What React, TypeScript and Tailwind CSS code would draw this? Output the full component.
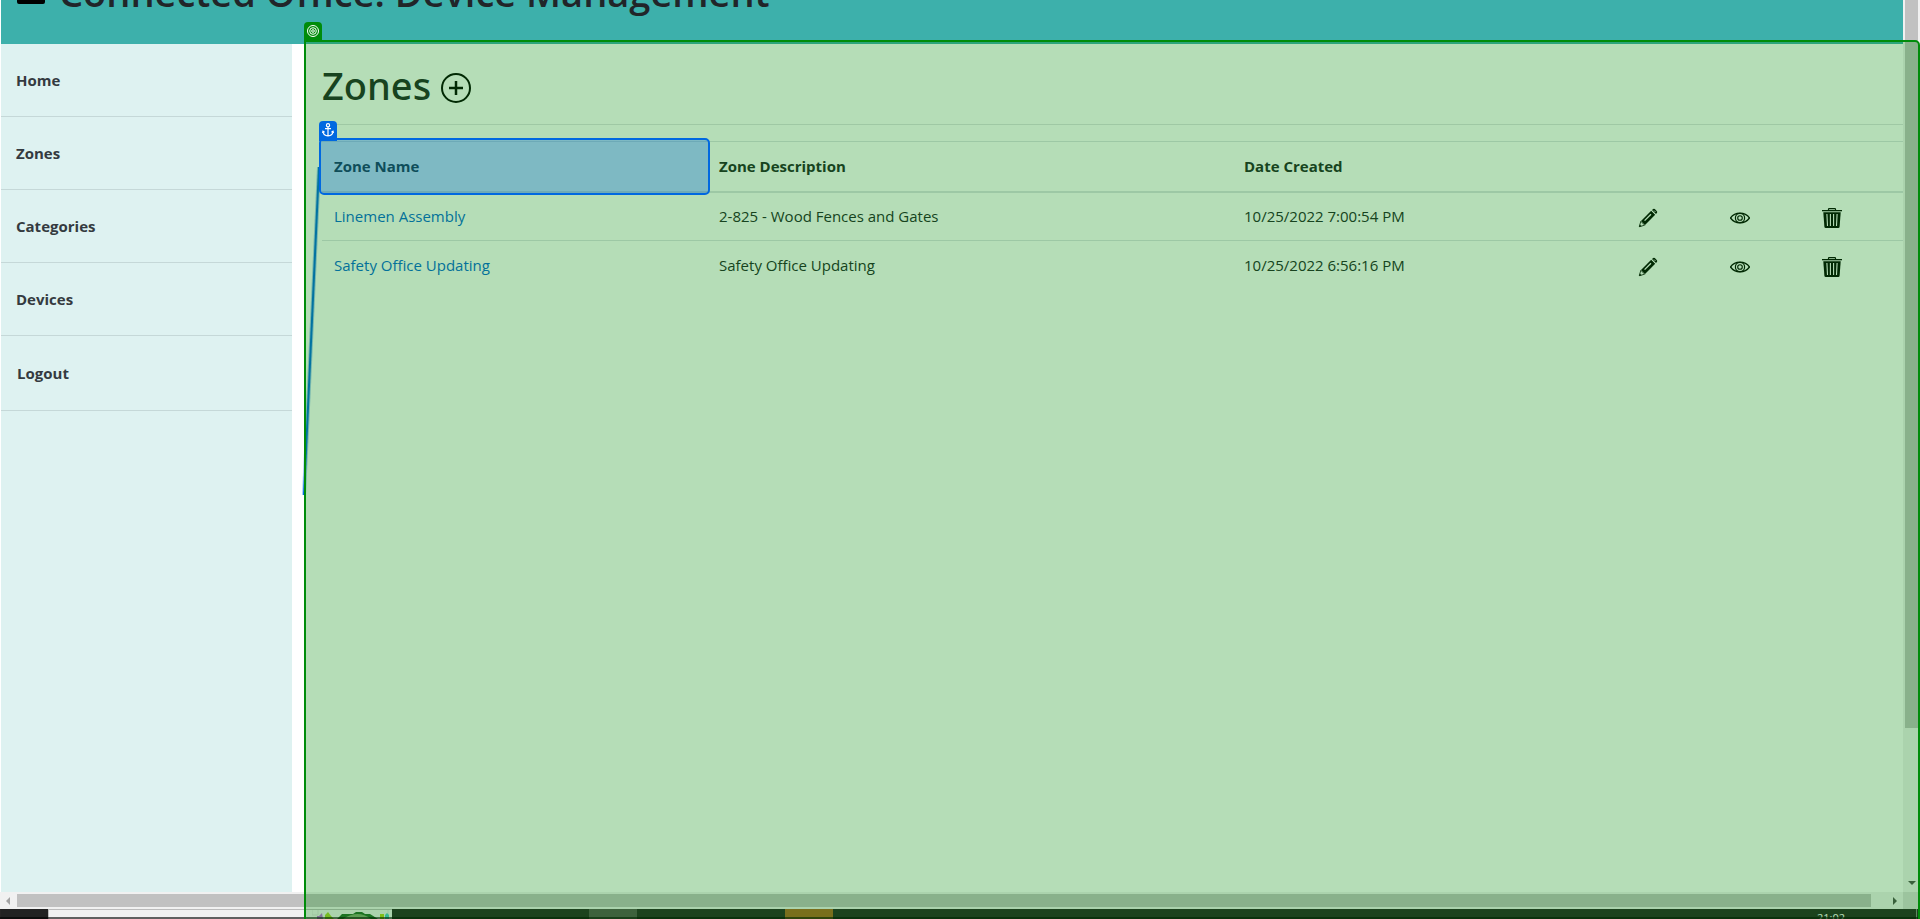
import React from "react";

const navItems = ["Home", "Zones", "Categories", "Devices", "Logout"];

const zones = [
  { name: "Linemen Assembly", description: "2-825 - Wood Fences and Gates", created: "10/25/2022 7:00:54 PM" },
  { name: "Safety Office Updating", description: "Safety Office Updating", created: "10/25/2022 6:56:16 PM" },
];

function PencilIcon() {
  return (
    <svg viewBox="0 0 20 20" className="size-5" aria-hidden="true">
      <path d="M13.2 2.8 17.2 6.8 7 17 3 13Z" fill="#000" />
      <path d="M14 2 15.2.9Q16 .4 16.8 1.1L18.9 3.2Q19.6 4 19 4.8L18 6Z" fill="#000" />
      <path d="m13.4 2.4 4.2 4.2" stroke="#fff" strokeWidth=".7" />
      <path d="M13 6.2 6.6 12.6" stroke="#fff" strokeWidth="1.3" />
      <path d="M2.8 13.3 1.3 18.7 6.7 17.2Z" fill="#fff" stroke="#000" strokeWidth=".8" />
      <path d="m1.1 18.9.7-2.5 1.8 1.8Z" fill="#000" />
      <path d="m16 2.5 1.5 1.5" stroke="#fff" strokeWidth=".8" />
    </svg>
  );
}

function EyeIcon() {
  return (
    <svg viewBox="0 0 20 20" className="size-5" fill="none" stroke="#000" aria-hidden="true">
      <path d="M.5 10C3 6.5 6.3 5.2 10 5.2S17 6.5 19.5 10C17 13.5 13.7 14.8 10 14.8S3 13.5.5 10Z" strokeWidth="1.3" />
      <circle cx="10" cy="10" r="4.6" strokeWidth="1.2" />
      <circle cx="10" cy="10" r="2.3" strokeWidth="1.1" />
    </svg>
  );
}

function TrashIcon() {
  return (
    <svg viewBox="0 0 20 20" className="size-5" aria-hidden="true">
      <path d="M6.5 2.3V1.3Q6.5.6 7.2.6H12.8Q13.5.6 13.5 1.3V2.3" fill="none" stroke="#000" strokeWidth="1.2" />
      <path d="M0 2H20V3.3H0Z" fill="#000" />
      <path d="M1.3 4.2H18.7L17.6 18.8Q17.5 20 16.3 20H3.7Q2.5 20 2.4 18.8Z" fill="#000" />
      <path d="m4.9 6 .6 12M8.4 6v12M11.6 6v12M15.1 6l-.6 12" stroke="#fff" strokeWidth="1.1" />
    </svg>
  );
}

function Header() {
  return (
    <header className="flex h-11 shrink-0 items-end gap-[14px] overflow-hidden bg-[#3db0ab] pb-7 pl-4">
      <svg viewBox="0 0 28 28" className="mb-3 size-7 shrink-0" aria-hidden="true">
        <path d="M0 28V24Q0 18 6 18H22Q28 18 28 24V26Q28 28 26 28H2Q0 28 0 26Z" fill="#000" />
        <circle cx="14" cy="8" r="7" fill="#000" />
      </svg>
      <h1 className="whitespace-nowrap text-[38px] leading-12 font-semibold text-[#212529]">
        Connected Office: Device Management
      </h1>
    </header>
  );
}

function Sidebar() {
  return (
    <nav className="w-[291px] shrink-0 bg-[#def2f1]">
      <ul>
        {navItems.map((item) => (
          <li
            key={item}
            className="flex h-[73px] items-center border-b border-[#c5d8d8] pl-[15px] last:h-[75px] last:pl-4"
          >
            <a href="#" className="text-[15px] leading-6 font-bold text-[#343a40]">
              {item}
            </a>
          </li>
        ))}
      </ul>
    </nav>
  );
}

function ZoneTable() {
  return (
    <table className="w-full table-fixed border-collapse text-left text-[15px] leading-6 text-[#212529]">
      <colgroup>
        <col className="w-[385px]" />
        <col className="w-[525px]" />
        <col />
        <col className="w-[92px]" />
        <col className="w-[92px]" />
        <col className="w-[93px]" />
      </colgroup>
      <thead>
        <tr className="h-[50px] border-t border-b-2 border-[#dee2e6] font-bold">
          <th className="relative px-3">
            Zone Name
            <div className="pointer-events-none absolute -inset-x-[3px] -top-1 -bottom-1 z-20 rounded-[5px] border-2 border-[#0068e0] bg-[#0068e0]/30">
              <span className="absolute -top-[19px] -left-0.5 flex h-5 w-[18px] items-start justify-center rounded-t-sm bg-[#0068e0] pt-0.5">
                <svg viewBox="0 0 12 14" className="h-3.5 w-3" fill="none" stroke="#fff" strokeWidth="1.2" aria-hidden="true">
                  <circle cx="6" cy="2.3" r="1.6" />
                  <path d="M6 4v8.8M3 5.7h6M1 8.3c0 3 2 4.4 5 4.6 3-.2 5-1.6 5-4.6M.5 10 1 8.3l1.6 1M11.5 10 11 8.3l-1.6 1" />
                </svg>
              </span>
            </div>
          </th>
          <th className="px-3">Zone Description</th>
          <th className="px-3">Date Created</th>
          <th aria-label="Edit" />
          <th aria-label="View" />
          <th aria-label="Delete" />
        </tr>
      </thead>
      <tbody>
        {zones.map((zone) => (
          <tr key={zone.name} className="h-[49px] border-b border-[#dee2e6] last:border-b-0">
            <td className="px-3">
              <a href="#" className="text-[#0366d6]">{zone.name}</a>
            </td>
            <td className="px-3">{zone.description}</td>
            <td className="px-3">{zone.created}</td>
            <td className="px-3 pt-[3px]">
              <button type="button" aria-label="Edit" className="block"><PencilIcon /></button>
            </td>
            <td className="px-3 pt-[3px]">
              <button type="button" aria-label="View" className="block"><EyeIcon /></button>
            </td>
            <td className="px-3 pt-[3px]">
              <button type="button" aria-label="Delete" className="block"><TrashIcon /></button>
            </td>
          </tr>
        ))}
      </tbody>
    </table>
  );
}

function Taskbar() {
  return (
    <footer className="relative flex h-2.5 shrink-0 overflow-hidden bg-[#272525] pl-px">
      <div className="w-[47px] bg-[#222]" />
      <div className="flex w-[344px] justify-end border-t border-l border-[#bbb] bg-[#f1f1f1]">
        <svg viewBox="0 0 80 9" className="h-[9px] w-20" aria-hidden="true">
          <path d="M0 0V5H6V0M76 0V9" fill="none" stroke="#ddd" />
          <path d="M25 9 30 4 41 4 44 2H50L53 4H58L66 9Z" fill="#276b2c" />
          <path d="M31 9Q46-1 59 9Z" fill="#83a773" />
          <path d="M5 9V6h2l3-3 1 6Z" fill="#bb6ed8" />
          <path d="M13 9V5l3-3 3 4 3 3Z" fill="#a5d02d" />
          <path d="M68 9V4h4v5Z" fill="#b3d31d" />
          <path d="M73 9V5l2-2 2 2v4Z" fill="#4bcbc8" />
        </svg>
      </div>
      <div className="ml-[197px] w-12 bg-[#555252]" />
      <div className="ml-[148px] w-12 bg-[#aa6424]" />
      <span className="mr-[71px] ml-auto pt-[3px] text-[11px] leading-3 text-white">21:02</span>
      <div className="mr-[3px] w-px bg-[#888]" />
      <div className="absolute inset-x-0 bottom-0 h-0.5 bg-black/60" />
    </footer>
  );
}

export default function App() {
  return (
    <div className="relative flex h-screen flex-col overflow-hidden bg-white font-['Open_Sans','Noto_Sans',sans-serif]">
      <div className="flex min-h-0 flex-1">
        <div className="flex min-w-0 flex-1 flex-col pl-px">
          <Header />
          <div className="flex min-h-0 flex-1">
            <Sidebar />
            <main className="min-w-0 flex-1 pl-[30px]">
              <div className="flex h-20 items-center gap-2.5 pt-2">
                <h2 className="pb-1.5 font-['Noto_Sans','Open_Sans',sans-serif] text-[38px] leading-12 font-medium text-[#212529]">
                  Zones
                </h2>
                <button type="button" aria-label="Add zone">
                  <svg viewBox="0 0 30 30" className="size-[30px]" fill="none" stroke="#000" strokeWidth="2" aria-hidden="true">
                    <circle cx="15" cy="15" r="14" />
                    <path d="M15 8v14M8 15h14" strokeWidth="2.5" />
                  </svg>
                </button>
              </div>
              <hr className="mb-4 border-[#e0e2e4]" />
              <ZoneTable />
            </main>
          </div>
        </div>
        <div className="flex w-[17px] shrink-0 flex-col items-center bg-[#f1f1f1]">
          <div className="h-[728px] w-[13px] bg-[#c1c1c1]" />
          <svg viewBox="0 0 8 4" className="mt-auto mb-[7px] h-1 w-2" aria-hidden="true">
            <path d="M0 0H8L4 4Z" fill="#505050" />
          </svg>
        </div>
      </div>
      <div className="flex h-[17px] shrink-0 items-center bg-[#f1f1f1] pl-1.5">
        <svg viewBox="0 0 4 8" className="h-2 w-1" aria-hidden="true">
          <path d="M4 0V8L0 4Z" fill="#a3a3a3" />
        </svg>
        <div className="ml-[7px] h-[13px] flex-1 bg-[#c1c1c1]" />
        <svg viewBox="0 0 4 8" className="mr-1.5 ml-[22px] h-2 w-1" aria-hidden="true">
          <path d="M0 0V8L4 4Z" fill="#505050" />
        </svg>
        <div className="h-[17px] w-[17px] bg-[#dcdcdc]" />
      </div>
      <Taskbar />

      <svg viewBox="0 0 20 332" className="pointer-events-none absolute top-[166px] left-[302px] h-[332px] w-5" aria-hidden="true">
        <path d="M17 1 2 329" stroke="#0068e0" strokeOpacity=".35" strokeWidth="4" />
        <path d="M17 1 2 329" stroke="#0068e0" strokeWidth="2" />
      </svg>
      <div className="pointer-events-none absolute top-10 right-0 -bottom-1 left-[304px] z-10 rounded-tr-[5px] border-2 border-[#008c0a] bg-[#058c0a]/[0.295]">
        <span className="absolute -top-5 -left-0.5 flex h-5 w-[18px] items-start justify-center rounded-t-sm bg-[#008c0a] pt-[3px]">
          <svg viewBox="0 0 12 12" className="size-3" fill="none" stroke="#fff" strokeWidth="1" aria-hidden="true">
            <circle cx="6" cy="6" r="5.5" />
            <circle cx="6" cy="6" r="3.3" />
            <circle cx="6" cy="6" r="1.3" />
          </svg>
        </span>
      </div>
    </div>
  );
}
